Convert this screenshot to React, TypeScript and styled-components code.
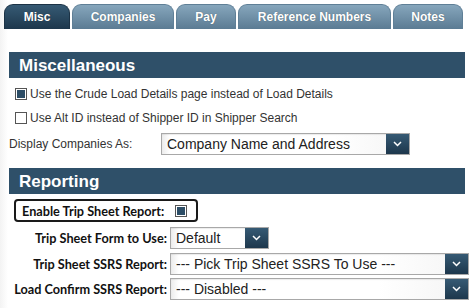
import React, { FC } from 'react';
import styled, { createGlobalStyle, css } from 'styled-components';

const GlobalStyle = createGlobalStyle`
  body {
    margin: 0;
    background: #fff;
    font-family: Arial, "Liberation Sans", sans-serif;
  }
`;

const darkFill = css`
  background: linear-gradient(to bottom, #365a74 0%, #1d374c 100%);
`;

const Page = styled.div`
  width: 472px;
  height: 308px;
  overflow: hidden;
  background: linear-gradient(to right, #f3f3f3 0px, #fff 8px);
`;

const TabBar = styled.div`
  display: flex;
  gap: 2px;
  padding: 4px 0 0 4px;
`;

const Tab = styled.div<{ $active?: boolean; $w: number }>`
  width: ${p => p.$w}px;
  height: 25px;
  box-sizing: border-box;
  border-radius: 9px 9px 0 0;
  border: 1px solid ${p => (p.$active ? '#1c3346' : '#5f7f96')};
  border-bottom: none;
  display: flex;
  align-items: center;
  justify-content: center;
  color: #fff;
  font-weight: bold;
  font-size: 12px;
  text-shadow: 0 0 1px rgba(0, 0, 0, 0.4);
  ${p =>
    p.$active
      ? darkFill
      : css`
          background: linear-gradient(to bottom, #86a6bc 0%, #5b7b93 100%);
        `}
`;

const Content = styled.div`
  padding: 23px 7px 0 9px;
`;

const SectionHeader = styled.div<{ $gap?: number }>`
  height: 26px;
  line-height: 27px;
  margin-top: ${p => p.$gap || 0}px;
  padding-left: 10px;
  background: #2f5069;
  color: #fff;
  font-weight: bold;
  font-size: 17px;
`;

const CheckRow = styled.label<{ $gap?: number }>`
  display: flex;
  align-items: center;
  height: 24px;
  margin-top: ${p => p.$gap || 0}px;
  padding-left: 6px;
  gap: 3px;
  font-size: 12px;
  color: #333;
`;

const Box = styled.span<{ $checked?: boolean }>`
  width: 12px;
  height: 12px;
  box-sizing: border-box;
  border: 1px solid #555;
  background: #fff;
  display: inline-flex;
  align-items: center;
  justify-content: center;
  flex-shrink: 0;
  &::after {
    content: '';
    width: 8px;
    height: 8px;
    background: ${p => (p.$checked ? '#2c4d66' : 'transparent')};
  }
`;

const InlineRow = styled.div`
  display: flex;
  align-items: center;
  margin-top: 3px;
  font-size: 12px;
  color: #333;
`;

const InlineLabel = styled.span`
  width: 152px;
`;

const SelectBox = styled.div<{ $w: number }>`
  width: ${p => p.$w}px;
  height: 22px;
  box-sizing: border-box;
  border: 1px solid #a8a8a8;
  display: flex;
  background: linear-gradient(to right, #ececec 0px, #fff 8px, #fff 70%, #f4f4f4 100%);
  box-shadow: inset 0 1px 1px rgba(0, 0, 0, 0.08);
`;

const SelectText = styled.span<{ $size?: number }>`
  flex: 1;
  padding-left: 5px;
  font-size: ${p => p.$size || 14}px;
  line-height: 20px;
  color: #222;
  white-space: nowrap;
  overflow: hidden;
`;

const Arrow = styled.span`
  width: 23px;
  ${darkFill}
  display: flex;
  align-items: center;
  justify-content: center;
`;

const FormGrid = styled.div`
  margin: 5px 0 0 -9px;
  display: grid;
  grid-template-columns: 167px 1fr;
  column-gap: 3px;
  align-items: center;
`;

const FieldLabel = styled.span`
  white-space: nowrap;
  font-family: Lato, "Open Sans", sans-serif;
  font-weight: bold;
  font-size: 12.7px;
  color: #111;
`;

const EnableBox = styled.div`
  grid-column: 1 / 3;
  margin-left: 14px;
  width: 184px;
  height: 23px;
  box-sizing: border-box;
  border: 2px solid #1a1a1a;
  border-radius: 4px;
  display: flex;
  align-items: center;
  justify-content: space-between;
  padding: 0 9px 0 6px;
  margin-bottom: 5px;
`;

const FieldCell = styled.div<{ $gap: number; $label?: boolean }>`
  margin-top: ${p => p.$gap}px;
  justify-self: ${p => (p.$label ? 'end' : 'start')};
`;

const Chevron: FC = () => (
  <svg width="9" height="6" viewBox="0 0 9 6">
    <path d="M1 1 L4.5 4.5 L8 1" fill="none" stroke="#fff" strokeWidth="1.5" />
  </svg>
);

interface SelectProps {
  value: string;
  width: number;
  size?: number;
}

const Select: FC<SelectProps> = ({ value, width, size }) => (
  <SelectBox $w={width}>
    <SelectText $size={size}>{value}</SelectText>
    <Arrow>
      <Chevron />
    </Arrow>
  </SelectBox>
);

const tabs = [
  { label: 'Misc', w: 66, active: true },
  { label: 'Companies', w: 102 },
  { label: 'Pay', w: 60 },
  { label: 'Reference Numbers', w: 153 },
  { label: 'Notes', w: 70 },
];

const reportFields = [
  { label: 'Trip Sheet Form to Use:', value: 'Default', width: 99, gap: 0 },
  { label: 'Trip Sheet SSRS Report:', value: '--- Pick Trip Sheet SSRS To Use ---', width: 299, gap: 4 },
  { label: 'Load Confirm SSRS Report:', value: '--- Disabled ---', width: 299, gap: 3 },
];

const App: FC = () => {
  return (
    <Page>
      <GlobalStyle />
      <TabBar>
        {tabs.map(t => (
          <Tab key={t.label} $active={t.active} $w={t.w}>
            {t.label}
          </Tab>
        ))}
      </TabBar>
      <Content>
        <SectionHeader>Miscellaneous</SectionHeader>
        <CheckRow $gap={4}>
          <Box $checked />
          Use the Crude Load Details page instead of Load Details
        </CheckRow>
        <CheckRow>
          <Box />
          Use Alt ID instead of Shipper ID in Shipper Search
        </CheckRow>
        <InlineRow>
          <InlineLabel>Display Companies As:</InlineLabel>
          <Select value="Company Name and Address" width={249} />
        </InlineRow>
        <SectionHeader $gap={13}>Reporting</SectionHeader>
        <FormGrid>
          <EnableBox>
            <FieldLabel>Enable Trip Sheet Report:</FieldLabel>
            <Box $checked />
          </EnableBox>
          {reportFields.map(f => (
            <React.Fragment key={f.label}>
              <FieldCell $gap={f.gap} $label>
                <FieldLabel>{f.label}</FieldLabel>
              </FieldCell>
              <FieldCell $gap={f.gap}>
                <Select value={f.value} width={f.width} />
              </FieldCell>
            </React.Fragment>
          ))}
        </FormGrid>
      </Content>
    </Page>
  );
};

export default App;
